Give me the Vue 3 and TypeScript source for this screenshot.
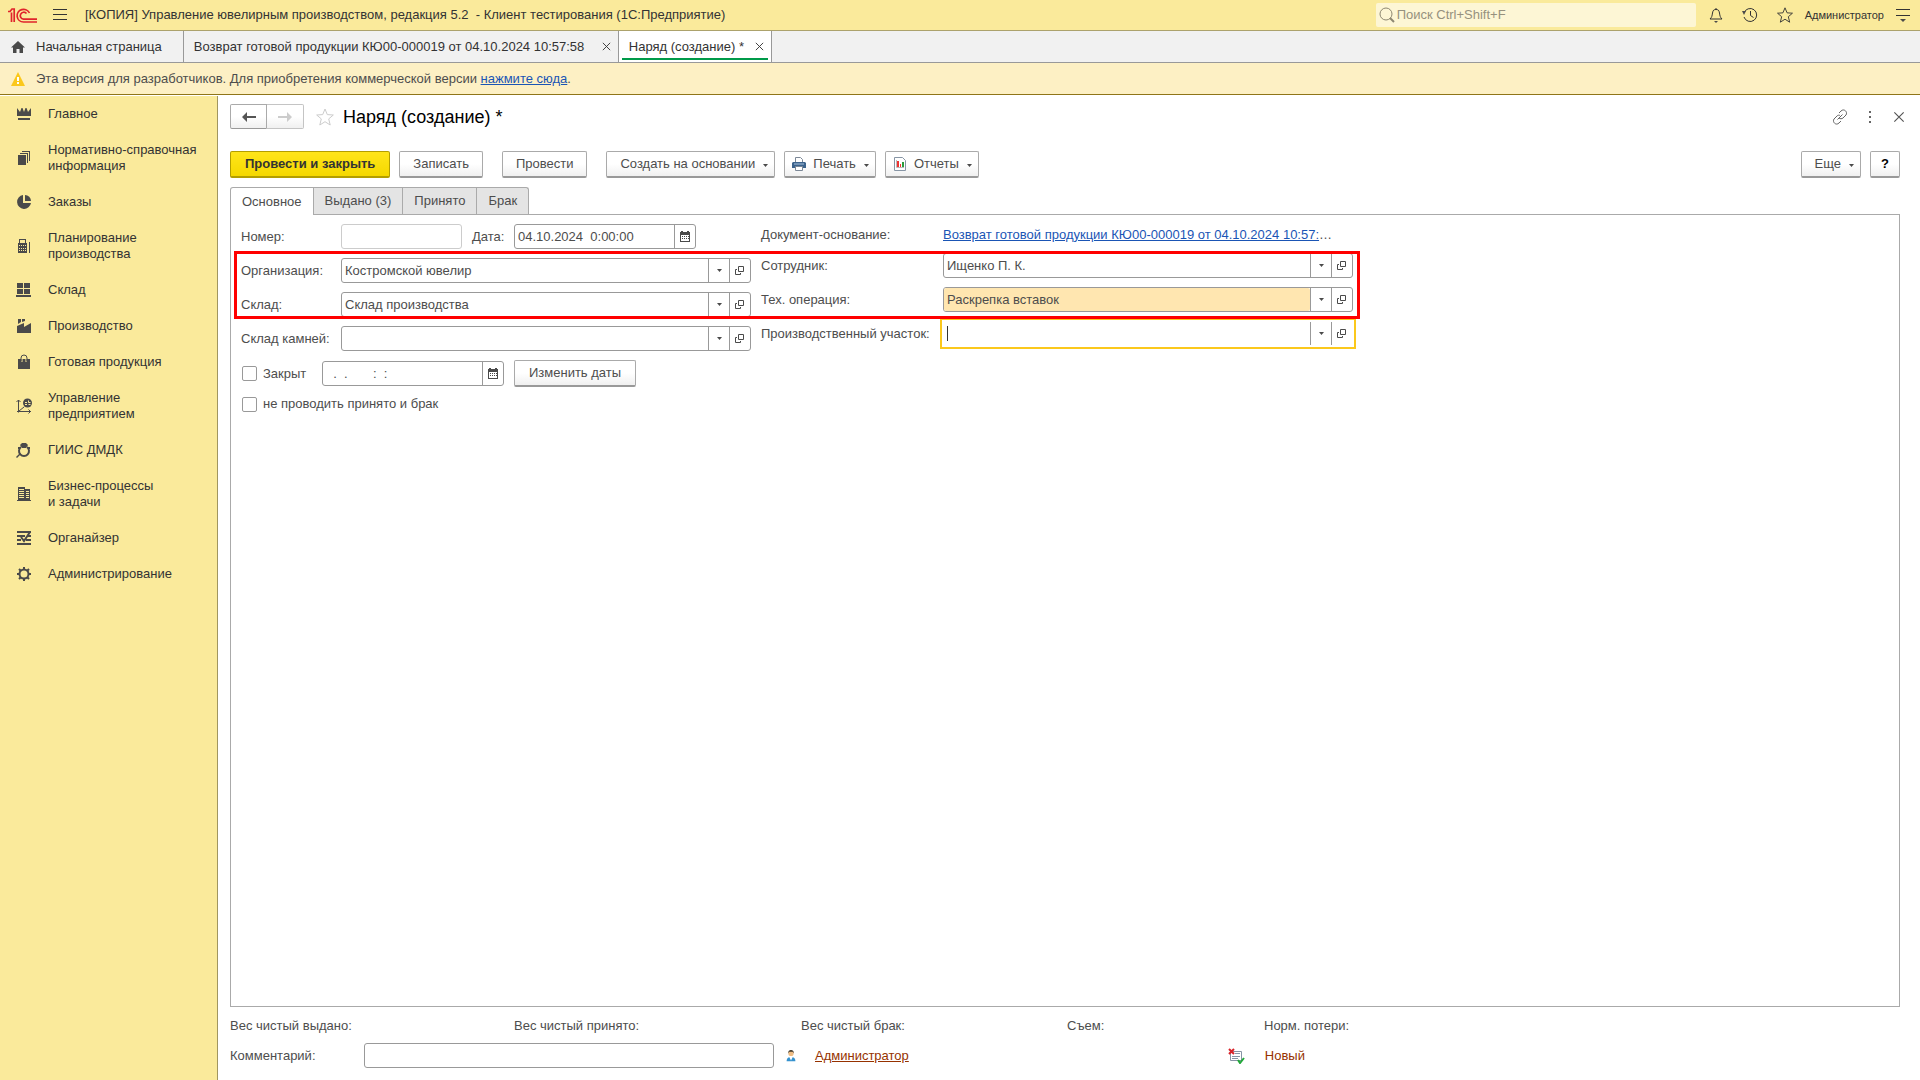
<script setup lang="ts">
import { ref } from 'vue'

interface Section {
  icon: string
  lines: string[]
}

interface Lookup {
  id: string
  label: string
  value: string
  state?: 'filled' | 'focused'
}

const sections: Section[] = [
  { icon: 'crown', lines: ['Главное'] },
  { icon: 'papers', lines: ['Нормативно-справочная', 'информация'] },
  { icon: 'pie', lines: ['Заказы'] },
  { icon: 'calc', lines: ['Планирование', 'производства'] },
  { icon: 'store', lines: ['Склад'] },
  { icon: 'factory', lines: ['Производство'] },
  { icon: 'bag', lines: ['Готовая продукция'] },
  { icon: 'chart', lines: ['Управление', 'предприятием'] },
  { icon: 'ring', lines: ['ГИИС ДМДК'] },
  { icon: 'building', lines: ['Бизнес-процессы', 'и задачи'] },
  { icon: 'organizer', lines: ['Органайзер'] },
  { icon: 'gear', lines: ['Администрирование'] },
]

const leftFields = ref<Lookup[]>([
  { id: 'org', label: 'Организация:', value: 'Костромской ювелир' },
  { id: 'warehouse', label: 'Склад:', value: 'Склад производства' },
  { id: 'stones', label: 'Склад камней:', value: '' },
])

const rightFields = ref<Lookup[]>([
  { id: 'employee', label: 'Сотрудник:', value: 'Ищенко П. К.' },
  { id: 'operation', label: 'Тех. операция:', value: 'Раскрепка вставок', state: 'filled' },
  { id: 'area', label: 'Производственный участок:', value: '', state: 'focused' },
])

const pages = ['Основное', 'Выдано (3)', 'Принято', 'Брак']
const activePage = ref(0)
const number = ref('')
const date = ref('04.10.2024  0:00:00')
const closedDate = ref('  .  .       :  :')
const closed = ref(false)
const skipPosting = ref(false)
const comment = ref('')
</script>

<template>
  <svg class="sprite" aria-hidden="true">
    <symbol id="crown" viewBox="0 0 16 16"><path d="M1 2l3 4 1.500-4 1 0L8 6l1.500-4h1L12 6l3-4v8H1zM2 12h12v2H2z" /></symbol>
    <symbol id="papers" viewBox="0 0 16 16"><path d="M2 5h8v10H2zM4 3h8v10h-1V4H4zM6 1h8v10h-1V2H6z" /></symbol>
    <symbol id="pie" viewBox="0 0 16 16"><path d="M7 1v8h8A7 7 0 1 1 7 1zM9 1a6 6 0 0 1 6 6H9z" /></symbol>
    <symbol id="calc" viewBox="0 0 16 16"><path fill-rule="evenodd" d="M3 1h7v4h1v10H2V5h1zM4 2v3h5V2zM3 7v1h1V7zM5 7v1h1V7zM7 7v1h1V7zM9 7v1h1V7zM3 10v1h1v-1zM5 10v1h1v-1zM7 10v1h1v-1zM9 10v1h1v-1zM3 12v1h1v-1zM5 12v1h1v-1zM7 12v1h1v-1zM9 12v1h1v-1zM13 4h1v11h-1z" /></symbol>
    <symbol id="store" viewBox="0 0 16 16"><path d="M1 1h6v5H1zM8 1h6v5H8zM1 7h6v5H1zM8 7h6v5H8zM0 13h15v2H0z" /></symbol>
    <symbol id="factory" viewBox="0 0 16 16"><path d="M2 1h3v3L2 6zM6 1h3v2L6 4zM1 8l7-3v4l7-4v10H1z" /></symbol>
    <symbol id="bag" viewBox="0 0 16 16"><path d="M2 5h12v10H2z" /><path d="M6 8V5M10 8V5" stroke="#faea9b" /><path d="M5 7V4a3 3 0 0 1 6 0v3" fill="none" stroke="#4a4a4a" /></symbol>
    <symbol id="chart" viewBox="0 0 16 16"><path d="M2.500 14.500V2M.5 4l2-2 2 2M1 13.500h14M12.500 11.500l2 2-2 2M3 13l5-4" fill="none" stroke="#4a4a4a" /><circle cx="11.500" cy="5" r="4.500" /><path d="M9 4.500h2M9 6.500h2M12.500 2.500v2h2M12.500 6.500h2" fill="none" stroke="#faea9b" /></symbol>
    <symbol id="ring" viewBox="0 0 16 16"><path d="M5 5a5 5 0 1 0 6 0" fill="none" stroke="#4a4a4a" stroke-width="2" /><path d="M6 1h4l2 2-2 3H6L4 3zM0 15l4-4 1 1-4 4zM2 5h2v2H2zM12 5h2v2h-2z" /></symbol>
    <symbol id="building" viewBox="0 0 16 16"><path fill-rule="evenodd" d="M2 1h7v2h5v11h1v1H1v-1h1zM3 3v1h5V3zM3 5v1h5V5zM3 7v1h5V7zM3 9v1h5V9zM3 11v1h5v-1zM10 5v1h3V5zM10 7v1h3V7zM10 9v1h3V9zM10 11v1h3v-1z" /></symbol>
    <symbol id="organizer" viewBox="0 0 16 16"><path d="M1 2h14M1 6h8M11 6h4M1 10h4M10 10h5M1 14h14" fill="none" stroke="#4a4a4a" stroke-width="2" /><path d="M14 2l-6 9-3-4" fill="none" stroke="#4a4a4a" stroke-width="2" /></symbol>
    <symbol id="gear" viewBox="0 0 16 16"><circle cx="8" cy="8" r="4.500" fill="none" stroke="#4a4a4a" stroke-width="2" /><path d="M8 1v3M8 12v3M1 8h3M12 8h3M3 3l2 2M11 11l2 2M13 3l-2 2M3 13l2-2" stroke="#4a4a4a" stroke-width="2" /></symbol>
    <symbol id="cross" viewBox="0 0 12 12"><path d="M2 2l8 8M10 2l-8 8" fill="none" stroke="currentColor" /></symbol>
    <symbol id="star" viewBox="0 0 20 20"><path d="M10 2l2.300 5.600 6 .4-4.600 3.900 1.500 6.100-5.200-3.300L4.800 18l1.500-6.100L1.700 8l6-.4z" fill="none" stroke="currentColor" /></symbol>
    <symbol id="calendar" viewBox="0 0 10 11"><path fill-rule="evenodd" d="M1 0h2v1h4V0h2v1h1v10H0V1h1zM1 4v6h8V4z" /><path d="M2 5h1v1H2zM4 5h1v1H4zM6 5h1v1H6zM2 7h1v1H2zM4 7h1v1H4zM6 7h1v1H6zM8 5h1v1H8zM8 7h1v1H8z" /></symbol>
    <symbol id="open" viewBox="0 0 10 10"><path d="M3.500.5h5v5h-5zM2 3.500H.5v5h5V7" fill="none" stroke="#4a4a4a" /></symbol>
    <symbol id="caret" viewBox="0 0 5 3"><path d="M0 0h5L2.500 3z" /></symbol>
  </svg>

  <div class="app">
    <header class="titlebar">
      <svg class="logo" viewBox="0 0 30 15" aria-label="1С">
        <path d="M0 3.500h2L4 1h2.200v13M3.500 4.500V14M21.500 5a6.500 6.300 0 1 0-6 9H29M18.500 5.500a3.500 3.500 0 1 0-3 5.700H29" fill="none" stroke="#e0242b" stroke-width="1.700" />
      </svg>
      <button class="plain" aria-label="Меню">
        <svg width="15" height="12" viewBox="0 0 15 12"><path d="M0 .5h14M0 5.500h14M0 10.500h14" stroke="#333" /></svg>
      </button>
      <h1>[КОПИЯ] Управление ювелирным производством, редакция 5.2&nbsp; - Клиент тестирования (1С:Предприятие)</h1>
      <label class="search">
        <svg width="16" height="16" viewBox="0 0 16 16"><circle cx="7" cy="7" r="6" fill="none" stroke="#8d8771" /><path d="M11 11l4 4" stroke="#8d8771" stroke-width="2" /></svg>
        <input type="text" placeholder="Поиск Ctrl+Shift+F" aria-label="Поиск" />
      </label>
      <div class="tools">
        <button class="plain" aria-label="Уведомления">
          <svg width="16" height="16" viewBox="0 0 16 16"><path d="M8 1v1M2 12h12c-2-2-2-3-2.500-6C11 3 10 2.500 8 2.500S5 3 4.500 6C4 9 4 10 2 12z" fill="none" stroke="#333" /><path d="M6 14h4l-2 2z" /></svg>
        </button>
        <button class="plain" aria-label="История">
          <svg width="16" height="16" viewBox="0 0 16 16"><path d="M2 6a6.500 6.500 0 1 1 0 4M8.500 4v4.500l3 2" fill="none" stroke="#333" /><path d="M0 4h4L2 8z" /></svg>
        </button>
        <button class="plain" aria-label="Избранное"><svg class="ink" width="18" height="18"><use href="#star" /></svg></button>
      </div>
      <span class="user">Администратор</span>
      <button class="plain" aria-label="Настройки окна">
        <svg width="14" height="14" viewBox="0 0 14 14"><path d="M0 1.500h14M0 7.500h14" stroke="#333" /><path d="M4 11h6l-3 3z" /></svg>
      </button>
    </header>

    <nav class="windows">
      <a href="#home" class="window home">
        <svg width="14" height="12" viewBox="0 0 14 12"><path d="M7 0l7 6.500h-2V12H8.500V8h-3v4H2V6.500H0z" /></svg>
        <span>Начальная страница</span>
      </a>
      <div class="window source">
        <span>Возврат готовой продукции КЮ00-000019 от 04.10.2024 10:57:58</span>
        <button class="plain" aria-label="Закрыть"><svg width="11" height="11"><use href="#cross" /></svg></button>
      </div>
      <div class="window active">
        <span>Наряд (создание) *</span>
        <button class="plain" aria-label="Закрыть"><svg width="11" height="11"><use href="#cross" /></svg></button>
      </div>
    </nav>

    <div class="notice">
      <svg width="14" height="14" viewBox="0 0 14 14"><path d="M7 0l7 14H0z" fill="#fbc81c" /><path d="M7 5v4M7 10v2" stroke="#fff" stroke-width="2" /></svg>
      <p>Эта версия для разработчиков. Для приобретения коммерческой версии <a href="#buy">нажмите сюда</a>.</p>
    </div>

    <div class="body">
      <aside>
        <a v-for="s in sections" :key="s.icon" :href="'#' + s.icon">
          <svg width="16" height="16"><use :href="'#' + s.icon" /></svg>
          <span><template v-for="(line, i) in s.lines" :key="line"><br v-if="i" />{{ line }}</template></span>
        </a>
      </aside>

      <main>
        <div class="heading">
          <div class="history">
            <button aria-label="Назад"><svg width="14" height="10" viewBox="0 0 14 10"><path d="M0 5l5-5v4h9v2H5v4z" fill="#555" /></svg></button>
            <button aria-label="Вперед"><svg width="14" height="10" viewBox="0 0 14 10"><path d="M14 5L9 0v4H0v2h9v4z" fill="#ccc" /></svg></button>
          </div>
          <button class="plain favorite" aria-label="В избранное"><svg width="20" height="20"><use href="#star" /></svg></button>
          <h2>Наряд (создание) *</h2>
          <div class="form-tools">
            <button class="plain" aria-label="Ссылка">
              <svg width="16" height="16" viewBox="0 0 16 16"><path d="M7 4l2-2c3-3 7 1 5 4l-3 3c-1 1-3 1-4 0M9 12l-2 2c-3 3-7-1-5-4l3-3c1-1 2-1 3-.500M5.500 10.500l5-5" fill="none" stroke="#666" /></svg>
            </button>
            <button class="plain" aria-label="Действия">
              <svg width="4" height="12" viewBox="0 0 4 12"><path d="M1 0h2v2H1zM1 5h2v2H1zM1 10h2v2H1z" fill="#666" /></svg>
            </button>
            <button class="plain" aria-label="Закрыть форму"><svg width="14" height="14"><use href="#cross" /></svg></button>
          </div>
        </div>

        <div class="commands">
          <button class="btn primary">Провести и закрыть</button>
          <button class="btn">Записать</button>
          <button class="btn apart">Провести</button>
          <button class="btn menu apart">Создать на основании<svg class="caret"><use href="#caret" /></svg></button>
          <button class="btn menu pic">
            <svg width="14" height="14" viewBox="0 0 14 14"><path d="M3.500 6V.5h5l2 2V6z" fill="#fff" stroke="#7b8796" /><path d="M1 5h12l1 1v5H0V6z" fill="#3c638c" /><path d="M2 7h10" stroke="#a9c4df" /><path d="M3.500 9.500h7v4h-7z" fill="#fff" stroke="#7b8796" /></svg>
            Печать<svg class="caret"><use href="#caret" /></svg>
          </button>
          <button class="btn menu pic">
            <svg width="14" height="14" viewBox="0 0 14 14"><path d="M1.500.5h8l3 3v10h-11z" fill="#fff" stroke="#8795a5" /><path d="M3.500 3v7.500H11" fill="none" stroke="#bbb" /><path d="M4 4h2v6H4zM7 7h1v3H7z" fill="#e33" /><path d="M9 5h2v5H9z" fill="#2c9c3c" /></svg>
            Отчеты<svg class="caret"><use href="#caret" /></svg>
          </button>
          <span class="spacer"></span>
          <button class="btn menu">Еще<svg class="caret"><use href="#caret" /></svg></button>
          <button class="btn help">?</button>
        </div>

        <div class="pages" role="tablist">
          <button v-for="(p, i) in pages" :key="p" role="tab" :aria-selected="i === activePage" :class="{ current: i === activePage }" @click="activePage = i">{{ p }}</button>
        </div>

        <section class="panel">
          <form class="form" @submit.prevent>
            <div class="column">
              <div class="row">
                <label for="number">Номер:</label>
                <input id="number" v-model="number" class="number" type="text" />
                <label class="date-label" for="date">Дата:</label>
                <div class="field date">
                  <input id="date" v-model="date" type="text" />
                  <button type="button" aria-label="Выбрать дату"><svg width="10" height="11"><use href="#calendar" /></svg></button>
                </div>
              </div>
              <div v-for="f in leftFields" :key="f.id" class="row">
                <label :for="f.id">{{ f.label }}</label>
                <div class="field">
                  <input :id="f.id" v-model="f.value" type="text" />
                  <button type="button" aria-label="Выбрать"><svg class="caret"><use href="#caret" /></svg></button>
                  <button type="button" aria-label="Открыть"><svg width="10" height="10"><use href="#open" /></svg></button>
                </div>
              </div>
              <div class="row">
                <label class="check"><input v-model="closed" type="checkbox" />Закрыт</label>
                <div class="field date">
                  <input v-model="closedDate" type="text" aria-label="Дата закрытия" />
                  <button type="button" aria-label="Выбрать дату"><svg width="10" height="11"><use href="#calendar" /></svg></button>
                </div>
                <button type="button" class="btn dates">Изменить даты</button>
              </div>
              <label class="check"><input v-model="skipPosting" type="checkbox" />не проводить принято и брак</label>
            </div>

            <div class="column wide">
              <div class="row base">
                <span class="caption">Документ-основание:</span>
                <a href="#base">Возврат готовой продукции КЮ00-000019 от 04.10.2024 10:57:</a>…
              </div>
              <div v-for="f in rightFields" :key="f.id" class="row">
                <label :for="f.id">{{ f.label }}</label>
                <div class="field" :class="f.state">
                  <input :id="f.id" v-model="f.value" type="text" />
                  <button type="button" aria-label="Выбрать"><svg class="caret"><use href="#caret" /></svg></button>
                  <button type="button" aria-label="Открыть"><svg width="10" height="10"><use href="#open" /></svg></button>
                </div>
              </div>
            </div>
            <div class="marker"></div>
          </form>
        </section>

        <footer>
          <div class="totals">
            <span>Вес чистый выдано:</span>
            <span>Вес чистый принято:</span>
            <span>Вес чистый брак:</span>
            <span>Съем:</span>
            <span>Норм. потери:</span>
          </div>
          <div class="summary">
            <label for="comment">Комментарий:</label>
            <input id="comment" v-model="comment" type="text" />
            <svg width="12" height="14" viewBox="0 0 12 16"><path d="M1 14c0-4 2-5 5-5s5 1 5 5z" fill="#3592cf" /><path d="M4 9h4l-2 4z" fill="#fff" /><circle cx="6" cy="5" r="3" fill="#efbd85" /><path d="M3 5c-1-5 7-5 6 0L8 3H4z" fill="#3b3326" /></svg>
            <a href="#author">Администратор</a>
            <svg class="status" width="17" height="16" viewBox="0 0 17 16"><path d="M2.500 3.500h11v9h-11z" fill="#fff" stroke="#8795a5" /><path d="M7 5.500h5M4 8.500h8M4 10.500h6" stroke="#8795a5" /><path d="M1 1l5 5M6 1L1 6" stroke="#d8232a" stroke-width="2" /><path d="M10 12l2 3 4-5" fill="none" stroke="#22a83a" stroke-width="2" /></svg>
            <span class="state">Новый</span>
          </div>
        </footer>
      </main>
    </div>
  </div>
</template>

<style>
body {
  margin: 0;
}
</style>

<style scoped>
.app {
  display: flex;
  flex-direction: column;
  min-height: 100vh;
  background: #fff;
  color: #4d4d4d;
  font: 13px/16px "Liberation Sans", Arial, sans-serif;
}
* {
  box-sizing: border-box;
}
.sprite {
  position: absolute;
  width: 0;
  height: 0;
}
svg {
  flex: none;
  fill: #4a4a4a;
}
h1,
h2,
p {
  margin: 0;
  font-weight: normal;
}
button,
input {
  margin: 0;
  font: inherit;
  color: inherit;
}
.plain {
  display: flex;
  padding: 0;
  border: 0;
  background: none;
}
.caret {
  width: 5px;
  height: 3px;
}

.titlebar {
  display: flex;
  align-items: center;
  height: 31px;
  padding: 0 10px 0 8px;
  border-bottom: 1px solid #aca26c;
  background: #faea9b;
  color: #333;
}
.logo {
  width: 30px;
  height: 15px;
  margin-right: 15px;
}
h1 {
  flex: 1;
  margin-left: 17px;
  font-size: 13px;
  white-space: nowrap;
}
.search {
  display: flex;
  align-items: center;
  gap: 2px;
  width: 320px;
  height: 24px;
  padding-left: 3px;
  border-radius: 2px;
  background: #fdf6d5;
}
.search input {
  flex: 1;
  min-width: 0;
  padding: 0;
  border: 0;
  outline: 0;
  background: none;
}
.search input::placeholder {
  color: #96917e;
  opacity: 1;
}
.tools {
  display: flex;
  align-items: center;
  gap: 18px;
  margin-left: 12px;
}
.ink {
  color: #333;
}
.user {
  margin: 0 12px 0 11px;
  font-size: 11px;
}

.windows {
  display: flex;
  height: 32px;
  border-bottom: 1px solid #999;
  background: #f1f1f1;
}
.window {
  display: flex;
  align-items: center;
  justify-content: space-between;
  gap: 8px;
  padding: 0 6px 0 10px;
  border-right: 1px solid #999;
  color: #333;
  text-decoration: none;
  white-space: nowrap;
}
.window.home {
  gap: 11px;
  padding: 0 21px 0 11px;
}
.window.source {
  min-width: 435px;
}
.window.active {
  min-width: 153px;
  background: linear-gradient(#009a49, #009a49) center bottom 2px / calc(100% - 6px) 2px no-repeat #fff;
}

.notice {
  display: flex;
  align-items: center;
  gap: 11px;
  height: 32px;
  padding-left: 11px;
  border-bottom: 1px solid #8f7518;
  background: #fdf0c4;
}
a {
  color: #1a55b5;
}

.body {
  display: flex;
  flex: 1;
}
aside {
  width: 218px;
  margin-top: 1px;
  border-right: 1px solid #a09660;
  background: #faea9b;
}
aside a {
  display: flex;
  align-items: center;
  gap: 16px;
  padding: 10px 0 10px 16px;
  color: #333;
  text-decoration: none;
}

main {
  display: flex;
  flex: 1;
  flex-direction: column;
  min-width: 0;
  padding: 9px 20px 12px 12px;
}
.heading {
  display: flex;
  align-items: center;
  height: 25px;
}
.history {
  display: flex;
}
.history button {
  display: flex;
  align-items: center;
  justify-content: center;
  width: 37px;
  height: 25px;
  border: 1px solid #aaa;
  border-bottom-color: #999;
  border-radius: 2px 0 0 2px;
  background: linear-gradient(#fff 50%, #f0f0f0);
}
.history button + button {
  border-color: #c4c4c4;
  border-left: 0;
  border-radius: 0 2px 2px 0;
}
.favorite {
  margin-left: 11px;
  color: #ccc;
}
h2 {
  margin-left: 8px;
  color: #000;
  font-size: 18px;
  line-height: 24px;
}
.form-tools {
  display: flex;
  align-items: center;
  gap: 20px;
  margin-left: auto;
  margin-right: -6px;
  color: #555;
}

.commands {
  display: flex;
  gap: 9px;
  margin-top: 22px;
}
.btn {
  display: flex;
  align-items: center;
  height: 27px;
  padding: 0 13px;
  border: 1px solid #aaa;
  border-bottom: 2px solid #999;
  border-radius: 2px;
  background: linear-gradient(#fff 50%, #f0f0f0);
  white-space: nowrap;
}
.primary {
  padding: 0 14px;
  border-color: #b39e00;
  background: linear-gradient(#ffe51a, #f5d800);
  color: #333;
  font-weight: bold;
}
.apart {
  margin-left: 10px;
}
.menu {
  padding: 0 6px 0 13px;
}
.menu .caret {
  margin: 3px 0 0 8px;
}
.pic {
  padding-left: 7px;
}
.pic svg:first-child {
  margin-right: 7px;
}
.spacer {
  flex: 1;
}
.help {
  justify-content: center;
  width: 30px;
  padding: 0;
  color: #000;
  font-weight: bold;
}

.pages {
  display: flex;
  margin-top: 9px;
}
.pages button {
  height: 27px;
  padding: 0 11px;
  border: 1px solid #aaa;
  border-width: 1px 1px 0 0;
  background: #e4e4e4;
}
.pages button:first-child {
  border-left-width: 1px;
  border-radius: 3px 0 0;
}
.pages button:last-child {
  border-radius: 0 3px 0 0;
}
.pages .current {
  z-index: 1;
  height: 28px;
  margin-bottom: -1px;
  background: #fff;
}
.panel {
  flex: 1;
  padding: 9px 10px;
  border: 1px solid #aaa;
}
.form {
  position: relative;
  display: flex;
  align-items: flex-start;
  gap: 10px;
  max-width: 1112px;
}
.column {
  display: flex;
  flex: 510;
  flex-direction: column;
  gap: 9px;
  min-width: 0;
}
.wide {
  flex: 592;
}
.row {
  display: flex;
  align-items: center;
  min-height: 25px;
}
.row > label:first-child,
.caption {
  flex: none;
  width: 100px;
}
.wide .row > label:first-child,
.caption {
  width: 182px;
}
.row.base {
  min-height: 20px;
  padding-top: 2px;
  white-space: nowrap;
}
.number,
.field,
.summary input {
  height: 25px;
  border: 1px solid #999;
  border-radius: 3px;
  background: #fff;
}
.number {
  width: 121px;
  border-color: #ccc;
}
.row > .date-label {
  width: 52px;
  padding-left: 10px;
}
.field {
  display: flex;
  flex: 1;
  min-width: 0;
}
.field input {
  flex: 1;
  min-width: 0;
  padding: 0 3px;
  border: 0;
  border-radius: 2px;
  outline: 0;
  background: none;
  white-space: pre;
}
.field button {
  display: flex;
  align-items: center;
  justify-content: center;
  width: 21px;
  padding: 0;
  border: 0;
  border-left: 1px solid #999;
  background: none;
}
.field.date {
  flex: none;
  width: 182px;
}
.filled input {
  background: #ffe6b0;
}
.focused {
  border-color: transparent;
  border-radius: 0;
  outline: 2px solid #fbc81c;
  outline-offset: 1px;
}
.focused input {
  background: linear-gradient(#333, #333) 3px center / 1px 15px no-repeat;
}
.row > label.check:first-child {
  width: 81px;
}
.check {
  display: flex;
  align-items: center;
  gap: 6px;
  min-height: 16px;
  padding-left: 1px;
}
.check input {
  width: 15px;
  height: 15px;
  border: 1px solid #999;
  border-radius: 2px;
  appearance: none;
  background: #fff;
}
.check input:checked {
  background: #999;
}
.dates {
  margin-left: 10px;
  padding: 0 14px;
}
.marker {
  position: absolute;
  top: 27px;
  right: -7px;
  left: -7px;
  height: 68px;
  border: 3px solid #f00;
  pointer-events: none;
}

.totals {
  display: grid;
  grid-template-columns: 284fr 287fr 266fr 197fr 636fr;
  margin-top: 11px;
}
.summary {
  display: flex;
  align-items: center;
  margin-top: 9px;
}
.summary label {
  width: 134px;
}
.summary input {
  width: 410px;
  margin-right: 11px;
}
.summary a {
  margin-left: 18px;
}
.summary a,
.state {
  color: #963200;
}
.status {
  margin: 0 20px 0 319px;
}
</style>
